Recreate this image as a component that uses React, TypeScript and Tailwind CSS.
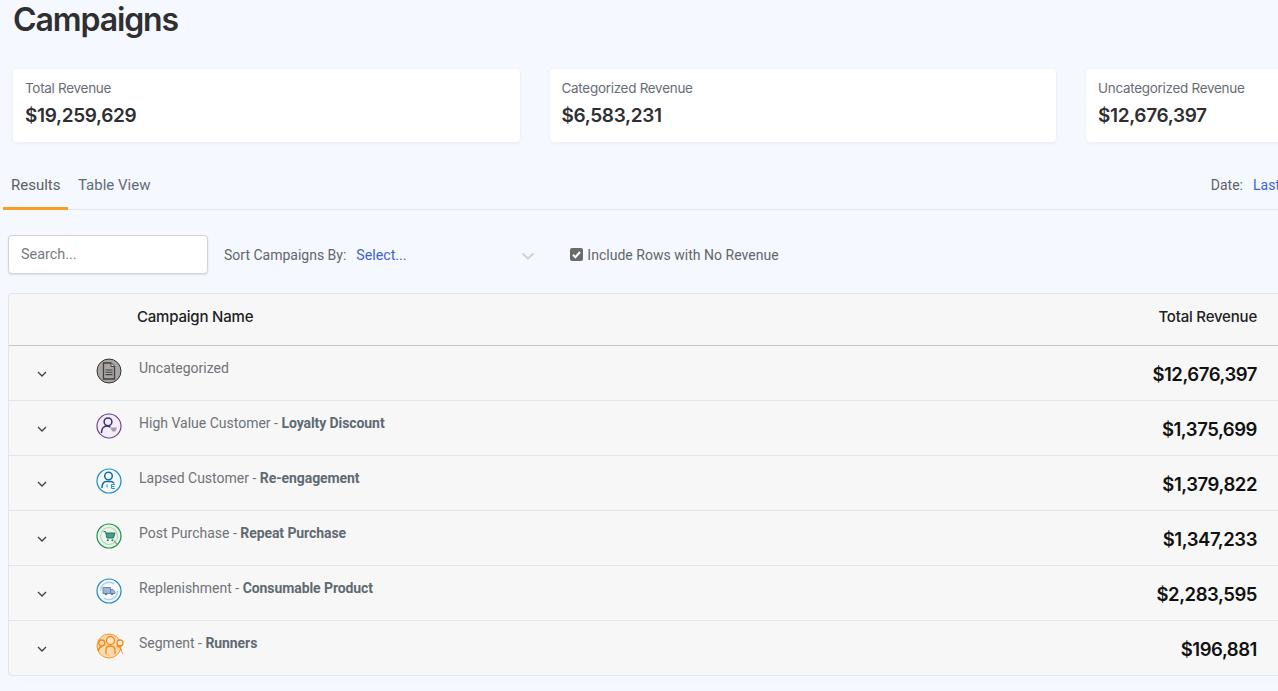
import React from "react";

const head = { fontFamily: '"Inter", "Liberation Sans", sans-serif' };

function DocIcon() {
  return (
    <svg width="26" height="26" viewBox="0 0 26 26" fill="none">
      <circle cx="13" cy="13" r="12" fill="#a6a6a8" stroke="#333" strokeWidth="1" />
      <path d="M7.500 5h7.500l3.500 3.500v12.500h-11z" fill="#a9a7a6" stroke="#4a3d33" strokeWidth="1.300" />
      <path d="M15 5v3.500h3.500" fill="#ddd" stroke="#4a3d33" strokeWidth="1" />
      <path d="M9.500 12h7M9.500 14.300h7M9.500 16.600h7" stroke="#444" strokeWidth="1.100" />
    </svg>
  );
}
function HandIcon() {
  return (
    <svg width="26" height="26" viewBox="0 0 26 26" fill="none">
      <circle cx="13" cy="13" r="12" fill="#f3eef5" stroke="#6a3d8f" strokeWidth="1.100" />
      <circle cx="12" cy="8.800" r="3.900" stroke="#3f2a80" strokeWidth="1.500" />
      <path d="M5.500 20c0-4 2-7 5.500-7 1.500 0 2.500.4 3.300 1.200" stroke="#3f2a80" strokeWidth="1.500" />
      <path d="M14 14.500h7l-1.500 4h-3z" fill="#a79bb0" />
    </svg>
  );
}
function LapsedIcon() {
  return (
    <svg width="26" height="26" viewBox="0 0 26 26" fill="none">
      <circle cx="13" cy="13" r="12" fill="#f5fafd" stroke="#1b8ac4" strokeWidth="1.200" />
      <circle cx="12.500" cy="8" r="3.800" stroke="#1668a8" strokeWidth="1.500" />
      <path d="M6 20c0-4 1.800-6.500 4.500-6.500h4c1.500 0 2.700.6 3.500 1.800" stroke="#1668a8" strokeWidth="1.500" />
      <path d="M11 16v3.500M15.500 16.500h3.500M15.500 18.500h3M15.500 20.500h3.500M15.500 16.500v4" stroke="#3f8fc4" strokeWidth="1" />
    </svg>
  );
}
function CartIcon() {
  return (
    <svg width="26" height="26" viewBox="0 0 26 26" fill="none">
      <circle cx="13" cy="13" r="12" fill="#eef5e9" stroke="#1f9150" strokeWidth="1.200" />
      <circle cx="13" cy="13" r="8.500" stroke="#b9d4bd" strokeWidth="1.200" />
      <path d="M7.500 8.500h2l1.400 6.500h6.600l1.500-5H10" fill="#4f9c8b" stroke="#1f7a62" strokeWidth="1" />
      <circle cx="11.800" cy="17.200" r="1" fill="#1f7a62" />
      <circle cx="16.400" cy="17.200" r="1" fill="#1f7a62" />
      <path d="M18 18l3 3" stroke="#7da68c" strokeWidth="1.300" />
    </svg>
  );
}
function TruckIcon() {
  return (
    <svg width="26" height="26" viewBox="0 0 26 26" fill="none">
      <circle cx="13" cy="13" r="12" fill="#f5fafd" stroke="#1b8ac4" strokeWidth="1.200" />
      <path d="M4.500 13a8.500 8.500 0 0 1 13.500-7M21.500 13a8.500 8.500 0 0 1-13.500 7" stroke="#b5c9e8" strokeWidth="1.500" />
      <rect x="7" y="9.500" width="7.500" height="6" fill="#9fb3d3" stroke="#5a7aad" strokeWidth=".8" />
      <path d="M14.500 11.500h2.500l2 2.300v1.700h-4.500z" fill="#9fb3d3" stroke="#5a7aad" strokeWidth=".8" />
      <circle cx="10" cy="16" r="1.300" fill="#5a7aad" />
      <circle cx="16" cy="16" r="1.300" fill="#5a7aad" />
    </svg>
  );
}
function GroupIcon() {
  return (
    <svg width="30" height="26" viewBox="0 0 30 26" fill="none">
      <circle cx="13" cy="13" r="12" fill="#fcd9a8" stroke="#f79a2e" strokeWidth="1" />
      <circle cx="14.500" cy="7.500" r="4" fill="#fde6c6" stroke="#f08a1d" strokeWidth="1.300" />
      <circle cx="5.800" cy="10" r="3" stroke="#f08a1d" strokeWidth="1.300" />
      <circle cx="24" cy="10" r="3" fill="#fbeedd" stroke="#f08a1d" strokeWidth="1.300" />
      <path d="M10 21v-4c0-2.500 1.800-4 4.500-4s4.500 1.500 4.500 4v4M2.500 18c0-2.500 1-4 3.500-4M20.500 14c2.500-1 4.500.5 5 4" stroke="#f08a1d" strokeWidth="1.300" />
      <path d="M25.500 18l1.500 3" stroke="#f5a5c0" strokeWidth="1.300" />
    </svg>
  );
}

const rows = [
  { icon: <DocIcon />, a: "Uncategorized", b: "", v: "$12,676,397" },
  { icon: <HandIcon />, a: "High Value Customer - ", b: "Loyalty Discount", v: "$1,375,699" },
  { icon: <LapsedIcon />, a: "Lapsed Customer - ", b: "Re-engagement", v: "$1,379,822" },
  { icon: <CartIcon />, a: "Post Purchase - ", b: "Repeat Purchase", v: "$1,347,233" },
  { icon: <TruckIcon />, a: "Replenishment - ", b: "Consumable Product", v: "$2,283,595" },
  { icon: <GroupIcon />, a: "Segment - ", b: "Runners", v: "$196,881" },
];

const cards = [
  ["Total Revenue", "$19,259,629"],
  ["Categorized Revenue", "$6,583,231"],
  ["Uncategorized Revenue", "$12,676,397"],
];

export default function App() {
  return (
    <div
      className="h-[691px] w-[1278px] overflow-hidden bg-[#f5f8fe] text-[14px] text-[#5f6368]"
      style={{ fontFamily: '"Roboto", "Liberation Sans", sans-serif' }}
    >
      <h1 style={head} className="ml-[13px] h-[69px] text-[32px] leading-[39px] font-semibold tracking-[-1.100px] text-[#2f2f31]">
        Campaigns
      </h1>

      <div className="ml-[13px] flex w-[1600px] gap-[30px]">
        {cards.map(([l, v]) => (
          <div key={l} className="flex h-[73px] w-[506.500px] flex-col rounded-[4px] bg-white px-[12px] pt-[11px] shadow-[0_1px_4px_rgba(0,0,0,0.06)]">
            <div style={head} className="text-[13.500px] leading-[17px] tracking-[-0.300px] text-[#696d75]">{l}</div>
            <div style={head} className="mt-[7px] text-[19px] leading-[24px] font-semibold tracking-[-0.350px] text-[#2f2f31]">{v}</div>
          </div>
        ))}
      </div>

      <div className="mt-[22px] ml-[3px] flex h-[46px] items-stretch border-b border-[#e1e4e8]">
        <div className="-mb-px w-[65px] border-b-[3px] border-[#f79c24] pt-[11px] pl-[8px] text-[15px] leading-[20px] text-[#5c5f63]">Results</div>
        <div className="ml-[10px] pt-[11px] text-[15px] leading-[20px] text-[#5f6b78]">Table View</div>
        <div className="ml-auto flex pt-[11px] text-[14px] leading-[20px]">
          <span className="text-[#5f6368]">Date:</span>
          <span className="ml-[10px] w-[25px] overflow-hidden whitespace-nowrap text-[#3b66d6]">Last 30 Days</span>
        </div>
      </div>

      <div className="mt-[25px] ml-[8px] flex h-[39px] items-center">
        <div className="flex h-[39px] w-[200px] items-center rounded-[4px] border border-[#d0d3d8] bg-white pl-[12px] text-[14.400px] text-[#777a7e] shadow-[0_1px_2px_rgba(0,0,0,0.1)]">Search...</div>
        <span className="ml-[16px] mt-[1px] text-[14px] text-[#62666b]">Sort Campaigns By:</span>
        <span className="ml-[10px] mt-[3px] w-[165px] text-[14.200px] text-[#3f5fd8]">Select...</span>
        <svg width="14" height="8" viewBox="0 0 14 8" fill="none" className="mt-[2px]">
          <path d="M1.500 1.500L7 6.500l5.500-5" stroke="#cfd0d2" strokeWidth="2" />
        </svg>
        <span className="ml-[35px] flex h-[13px] w-[13px] items-center justify-center rounded-[2px] bg-[#6b6b6b]">
          <svg width="11" height="11" viewBox="0 0 11 11" fill="none">
            <path d="M2 5.800L4.400 8.200 9 3" stroke="#fff" strokeWidth="2" />
          </svg>
        </span>
        <span className="ml-[4px] mt-[1px] text-[14px] tracking-[0.02px] text-[#62666b]">Include Rows with No Revenue</span>
      </div>

      <div className="mt-[19px] ml-[8px] w-[1290px] rounded-[4px] border border-[#e1e5ec] bg-[#f7f7f7]">
        <div className="flex h-[52px] items-center border-b border-[#c4c6ca] pr-[40px] pl-[128px] text-[#202124]" style={head}>
          <span className="-mt-[4px] text-[15px] font-medium tracking-[-0.200px]">Campaign Name</span>
          <span className="-mt-[4px] ml-auto text-[15px] font-medium tracking-[-0.200px]">Total Revenue</span>
        </div>
        {rows.map((r, i) => (
          <div key={r.a} className={`flex items-start pr-[40px] ${i < rows.length - 1 ? "h-[55px] border-b border-[#e1e5ec]" : "h-[54px]"}`}>
            <svg width="10" height="6" viewBox="0 0 10 6" fill="none" className="mt-[25px] ml-[28px]">
              <path d="M1 1l4 4 4-4" stroke="#3d4148" strokeWidth="1.300" />
            </svg>
            <div className="mt-[12px] ml-[49px] w-[43px] shrink-0">{r.icon}</div>
            <div className="mt-[13px] text-[14px] leading-[18px] text-[#6f7378]">
              {r.a}
              {r.b && <b className="font-bold tracking-[-0.080px] text-[#5f6a72]">{r.b}</b>}
            </div>
            <div style={head} className="mt-[16px] ml-auto text-[18.500px] leading-[24px] font-semibold tracking-[-0.450px] text-[#111]">{r.v}</div>
          </div>
        ))}
      </div>
    </div>
  );
}
